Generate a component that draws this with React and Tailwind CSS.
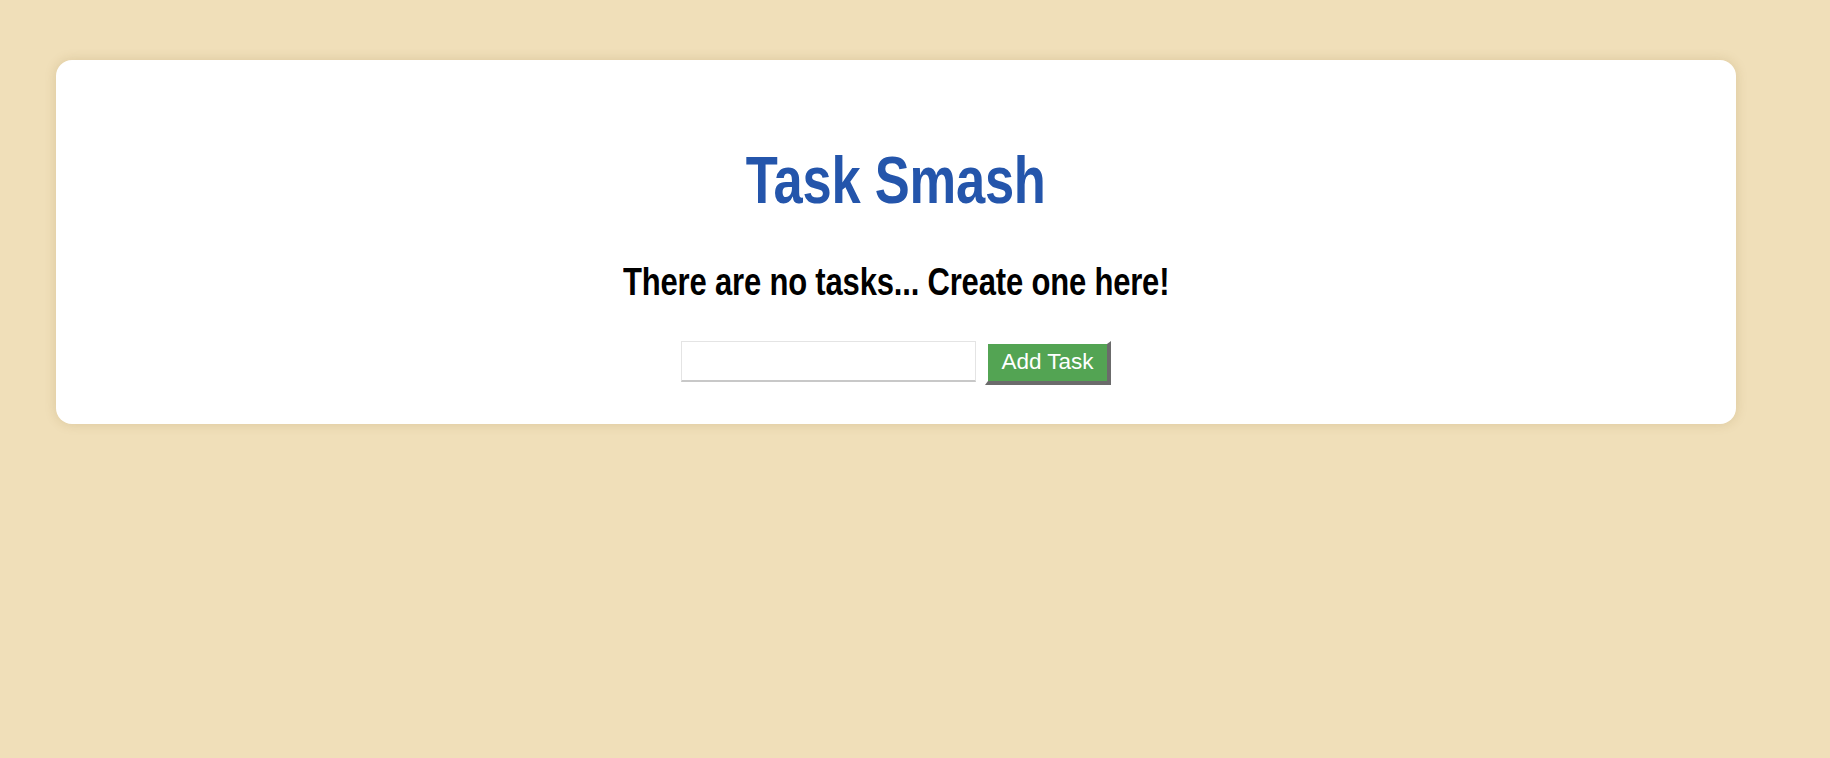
export default function App() {
  return (
    <div className="min-h-screen w-full bg-[#f0dfb9] pt-[60px]" style={{ fontFamily: '"Liberation Sans", Arial, sans-serif' }}>
      <div className="ml-[56px] w-[1680px] rounded-[16px] bg-white shadow-[0_0_12px_rgba(120,90,30,0.18)] pt-[87px] pb-[39px] flex flex-col items-center">
        <h1 className="text-[66px] leading-none font-bold text-[#2455ab] h-[66px]">
          <span className="inline-block scale-x-[0.795] tracking-[-0.3px]">Task Smash</span>
        </h1>
        <h2 className="mt-[50px] text-[38px] leading-none font-bold text-black h-[38px]">
          <span className="inline-block scale-x-[0.815] tracking-[-0.2px]">There are no tasks... Create one here!</span>
        </h2>
        <div className="mt-[40px] flex items-start gap-[9px]">
          <input
            type="text"
            className="w-[295px] h-[41px] border border-[#e4e4e4] border-b-2 border-b-[#c8c8c8] bg-white outline-none px-2"
          />
          <button className="h-[44px] w-[126px] bg-[#53a453] text-white text-[22.5px] leading-none border-t-[3px] border-l-[3px] border-r-4 border-b-4 border-t-white border-l-white border-r-[#6b6b6b] border-b-[#6b6b6b] flex items-center justify-center">
            Add Task
          </button>
        </div>
      </div>
    </div>
  );
}
